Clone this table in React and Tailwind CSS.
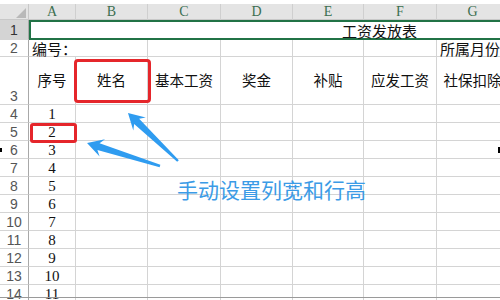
import React from "react";

const W = ["w-[47px]", "w-[72px]", "w-[73px]", "w-[72px]", "w-[71px]", "w-[73px]", "w-[72px]"];
const LETTERS = ["A", "B", "C", "D", "E", "F", "G"];
const HEAD3 = ["序号", "姓名", "基本工资", "奖金", "补贴", "应发工资", "社保扣除"];

function RowNum({ n, h, selected, bottom }) {
  return (
    <div
      className={`w-[29px] shrink-0 ${h} border-r border-b border-r-[#a8a8a8] border-b-[#d4d4d4] flex justify-center ${
        bottom ? "items-end pb-[1px]" : "items-center"
      } ${selected ? "bg-[#d4d4d4] text-[#333]" : "bg-white text-[#555]"} font-['Liberation_Sans',sans-serif] text-[14px] leading-none`}
    >
      {n}
    </div>
  );
}

function Arrow({ x, y, angle, L }) {
  const pts = `0,-1.2 ${L - 12},-3.6 ${L - 16},-9 ${L},0 ${L - 16},9 ${L - 12},3.6 0,1.2`;
  return (
    <polygon points={pts} fill="#2f9cf0" transform={`translate(${x} ${y}) rotate(${angle})`} />
  );
}

export default function App() {
  const cell = "shrink-0 border-r border-b border-[#d4d4d4] flex items-center justify-center";
  return (
    <div className="relative w-[500px] h-[300px] overflow-hidden bg-white font-['Noto_Sans_CJK_SC',sans-serif] text-[#111]">
      <div className="h-[4px]" />
      {/* column headers */}
      <div className="flex h-[16px]">
        <div className="relative w-[29px] shrink-0 bg-[#e4e4e4] border-r border-b border-[#c8c8c8]">
          <svg className="absolute left-0 top-0" width="29" height="16">
            <polygon points="26,4 26,14 16,14" fill="#b9b9b9" />
          </svg>
        </div>
        {LETTERS.map((l, i) => (
          <div
            key={l}
            className={`${W[i]} shrink-0 bg-[#e4e4e4] border-r border-b border-r-[#cfcfcf] border-b-[#c8c8c8] flex items-center justify-center text-[14px] leading-none text-[#3b6f50] font-['Liberation_Serif',serif]`}
          >
            {l}
          </div>
        ))}
      </div>
      {/* row 1 */}
      <div className="flex h-[20px]">
        <RowNum n="1" h="h-[20px]" selected />
        <div className="w-[700px] shrink-0 h-[20px] border-2 border-[#217346] flex items-center pl-[311px] text-[15px] leading-none">
          工资发放表
        </div>
      </div>
      {/* row 2 */}
      <div className="flex h-[17px]">
        <RowNum n="2" h="h-[17px]" />
        <div className="w-[119px] shrink-0 border-r border-b border-[#d4d4d4] flex items-center pl-[3px] text-[15px] leading-none whitespace-nowrap">
          编号：
        </div>
        <div className={`${W[2]} ${cell}`} />
        <div className={`${W[3]} ${cell}`} />
        <div className={`${W[4]} ${cell}`} />
        <div className={`${W[5]} ${cell}`} />
        <div className={`${W[6]} shrink-0 border-r border-b border-[#d4d4d4] flex items-center pl-[3px] text-[15px] leading-none whitespace-nowrap`}>
          所属月份
        </div>
      </div>
      {/* row 3 */}
      <div className="flex h-[48px]">
        <RowNum n="3" h="h-[48px]" bottom />
        {HEAD3.map((t, i) => (
          <div key={t} className={`${W[i]} ${cell} text-[14.5px] leading-none whitespace-nowrap`}>
            {t}
          </div>
        ))}
      </div>
      {/* data rows */}
      {Array.from({ length: 11 }, (_, k) => (
        <div key={k} className="flex h-[18px]">
          <RowNum n={String(k + 4)} h="h-[18px]" />
          {W.map((w, i) => (
            <div
              key={i}
              className={`${w} ${cell} ${i === 0 ? "font-['Liberation_Serif',serif] text-[15px] leading-none pt-[2px]" : ""}`}
            >
              {i === 0 ? k + 1 : null}
            </div>
          ))}
        </div>
      ))}

      {/* annotations */}
      <div className="absolute left-[74px] top-[59px] w-[77px] h-[44px] border-[3px] border-[#e5262b] rounded-[4px]" />
      <div className="absolute left-[30px] top-[123px] w-[47px] h-[20px] border-[3px] border-[#e5262b] rounded-[3px]" />
      <svg className="absolute left-0 top-0 pointer-events-none" width="500" height="300">
        <Arrow x={178} y={161} angle={223.8} L={69.3} />
        <Arrow x={160} y={166} angle={197.5} L={76.5} />
      </svg>
      <div className="absolute left-[177px] top-[179px] text-[21px] leading-none text-[#3b9be6] whitespace-nowrap">
        手动设置列宽和行高
      </div>

      {/* small marks */}
      <div className="absolute left-0 top-[148px] w-[2px] h-[4px] bg-black" />
      <div className="absolute left-[498px] top-[147px] w-[2px] h-[6px] bg-black" />
      <div className="absolute left-0 top-[297px] w-[500px] h-[1px] bg-[#9a9a9a]" />
    </div>
  );
}
